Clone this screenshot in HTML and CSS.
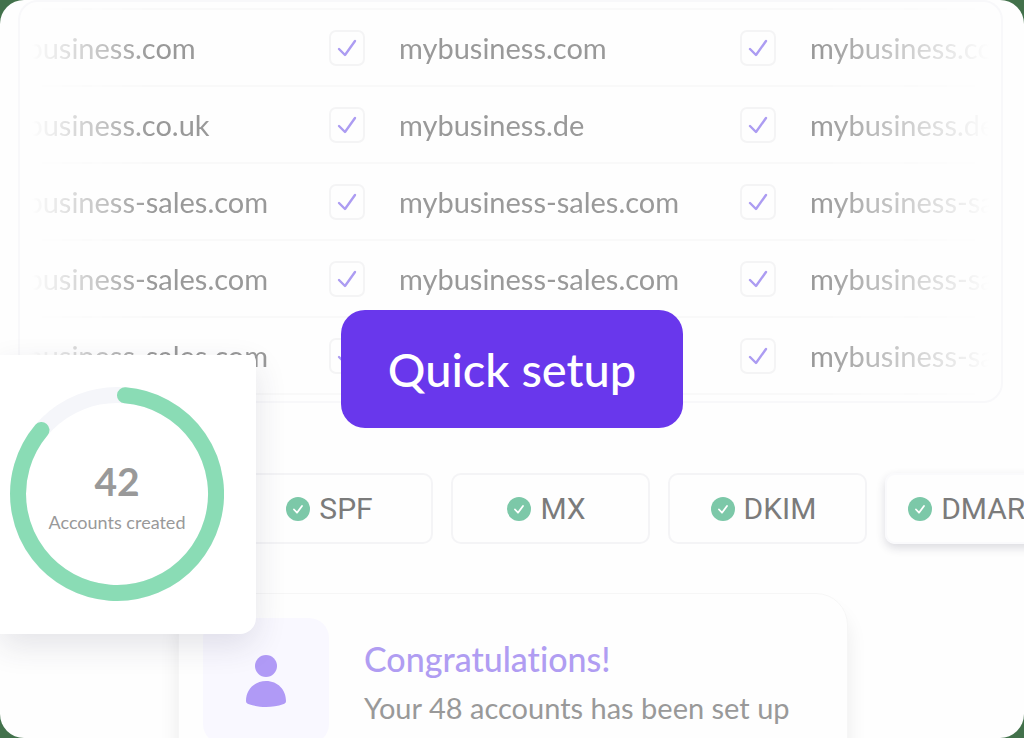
FILE: index.html
```html
<!DOCTYPE html>
<html lang="en">

    <head>
        <meta charset="UTF-8">
        <meta name="viewport" content="width=device-width, initial-scale=1.0">
        <title>Quick setup</title>

        <link rel="stylesheet" href="styles.css">
    </head>

    <body>
        <svg class="sprite" aria-hidden="true">
            <symbol id="tick" viewBox="0 0 36 36">
                <path d="M10 19l6 6L26 11" fill="none" stroke="currentColor" stroke-width="2.4" stroke-linecap="round" stroke-linejoin="round"/>
            </symbol>
            <symbol id="verified" viewBox="0 0 24 24">
                <circle cx="12" cy="12" r="12" fill="#7cc8a8"/>
                <path d="M8 12.500l3 3.200L16 9" fill="none" stroke="#fff" stroke-width="1.8" stroke-linecap="round" stroke-linejoin="round"/>
            </symbol>
        </svg>

        <main class="stage">
            <section class="domains">
                <div class="fade">
                    <table class="table">
                        <tbody id="rows"></tbody>
                    </table>
                </div>
            </section>

            <ul class="records">
                <li class="record"><svg class="verified"><use href="#verified"/></svg>SPF</li>
                <li class="record"><svg class="verified"><use href="#verified"/></svg>MX</li>
                <li class="record"><svg class="verified"><use href="#verified"/></svg>DKIM</li>
                <li class="record raised"><svg class="verified"><use href="#verified"/></svg>DMARC</li>
            </ul>

            <section class="notice">
                <div class="avatar">
                    <svg width="42" height="52" viewBox="0 0 42 52">
                        <circle cx="21" cy="11" r="11" fill="#b09af6"/>
                        <path d="M1 46C1 35 9 26 21 26s20 9 20 20c0 2-1 2.500-3 3.200-10 3.600-24 3.600-34 0C2 48.500 1 48 1 46z" fill="#b09af6"/>
                    </svg>
                </div>
                <div>
                    <h2 class="title">Congratulations!</h2>
                    <p class="text">Your 48 accounts has been set up</p>
                </div>
            </section>

            <section class="stat">
                <svg class="ring" viewBox="0 0 214 214">
                    <circle cx="107" cy="107" r="99" fill="none" stroke="#f5f6fa" stroke-width="16"/>
                    <path d="M115 8.300A99 99 0 1 1 31.500 43" fill="none" stroke="#8adcb5" stroke-width="16" stroke-linecap="round"/>
                </svg>
                <div class="count">
                    <strong>42</strong>
                    <span>Accounts created</span>
                </div>
            </section>

            <button class="quick" type="button">Quick setup</button>
        </main>

        <script>

            let rows = [
                ["mybusiness.com", "mybusiness.com", "mybusiness.com"],
                ["mybusiness.co.uk", "mybusiness.de", "mybusiness.de"],
                ["mybusiness-sales.com", "mybusiness-sales.com", "mybusiness-sales.com"],
                ["mybusiness-sales.com", "mybusiness-sales.com", "mybusiness-sales.com"],
                ["mybusiness-sales.com", "", "mybusiness-sales.com"]
            ];

            let html = "";
            for (let row of rows) {
                html += "<tr>";
                for (let name of row) {
                    html += `<td><label class="domain"><span class="check"><input type="checkbox" checked><svg><use href="#tick"/></svg></span>${name}</label></td>`;
                }
                html += "</tr>";
            }
            document.getElementById("rows").innerHTML = html;

        </script>
    </body>

</html>
```
FILE: styles.css
```css
* {
    margin: 0;
    padding: 0;
    box-sizing: border-box;
}

body {
    background-color: #42714b;
    color: #999;
    font-family: Lato, "Open Sans", sans-serif;
    font-variant-ligatures: none;
}

.sprite {
    display: none;
}

.stage {
    position: relative;
    height: 100vh;
    overflow: hidden;
    border-radius: 24px;
    background-color: #fefefe;
}

/* domain list */
.domains {
    margin: 0 21px 0 18px;
    padding: 6px 12px;
    border: 2px solid #f8f8fa;
    border-radius: 20px;
}

.fade {
    display: flex;
    justify-content: center;
    overflow: hidden;
    -webkit-mask-image: linear-gradient(to right, transparent, #000 120px, #000 calc(100% - 170px), transparent);
    mask-image: linear-gradient(to right, transparent, #000 120px, #000 calc(100% - 170px), transparent);
}

.table {
    flex: none;
    width: 1233px;
    table-layout: fixed;
    border-collapse: collapse;
    border-top: 2px solid #f9f9f9;
}

.table td {
    height: 77px;
    padding-left: 24px;
    border-bottom: 2px solid #f9f9f9;
}

.domain {
    display: flex;
    align-items: center;
    gap: 34px;
    font-size: 29px;
}

.check {
    display: grid;
    color: #ac9cf2;
}

.check input,
.check svg {
    grid-area: 1 / 1;
    width: 36px;
    height: 36px;
}

.check input {
    appearance: none;
    border: 2px solid #f4f4f5;
    border-radius: 7px;
}

.check svg {
    pointer-events: none;
}

/* dns records */
.records {
    display: flex;
    gap: 18px;
    margin-top: 70px;
    padding-left: 234px;
    list-style: none;
}

.record {
    display: flex;
    flex: none;
    justify-content: center;
    align-items: center;
    gap: 9px;
    width: 199px;
    height: 71px;
    padding-right: 8px;
    border: 2px solid #f4f4f6;
    border-radius: 10px;
    color: #7b7b7b;
    font-family: Roboto, sans-serif;
    font-size: 30px;
}

.raised {
    padding-right: 16px;
    border-color: #fafafc;
    box-shadow: 0 4px 10px rgba(40, 40, 70, 0.16);
}

.verified {
    width: 24px;
    height: 24px;
}

/* notice */
.notice {
    display: flex;
    gap: 35px;
    width: 670px;
    height: 200px;
    margin: 49px 0 0 178px;
    padding: 24px;
    border: 1px solid #f6f6f6;
    border-radius: 32px;
    background-color: #fefefe;
    box-shadow: 0 16px 20px rgba(0, 0, 0, 0.08);
}

.avatar {
    display: flex;
    justify-content: center;
    align-items: center;
    width: 126px;
    height: 126px;
    border-radius: 20px;
    background-color: #f9f8ff;
}

.title {
    margin-top: 20px;
    color: #b09df2;
    font-size: 34px;
    font-weight: 500;
    line-height: 42px;
}

.text {
    margin-top: 10px;
    font-size: 29px;
    line-height: 36px;
}

/* accounts counter */
.stat {
    position: absolute;
    top: 355px;
    left: 0;
    display: grid;
    width: 256px;
    height: 279px;
    padding: 32px 10px;
    border-radius: 0 6px 16px 0;
    background-color: #fff;
    box-shadow: 0 12px 32px rgba(40, 40, 70, 0.12);
}

.ring,
.count {
    grid-area: 1 / 1;
    width: 214px;
    height: 214px;
}

.count {
    display: flex;
    flex-direction: column;
    justify-content: center;
    align-items: center;
    gap: 6px;
    padding-top: 4px;
}

.count strong {
    font-size: 39px;
    line-height: 46px;
}

.count span {
    font-size: 18px;
    line-height: 24px;
}

.quick {
    position: absolute;
    top: 310px;
    left: 50%;
    width: 342px;
    height: 118px;
    transform: translateX(-50%);
    border: none;
    border-radius: 24px;
    background-color: #6937ec;
    color: #fff;
    font-family: inherit;
    font-size: 47px;
    font-weight: 500;
}
```
